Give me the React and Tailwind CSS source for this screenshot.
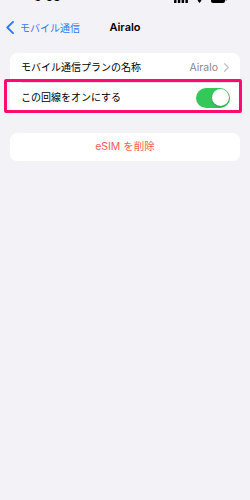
import { useState } from "react";

const font = { fontFamily: 'Inter, "Noto Sans CJK JP", sans-serif' };

function StatusBar() {
  return (
    <div className="h-[13px] overflow-hidden">
      <div className="-mt-[11px] flex items-end justify-between h-[14px] pl-[34px] pr-[23px]">
        <span className="text-[12px] font-semibold leading-none text-black">9:53</span>
        <div className="flex items-end gap-[6px]">
          <svg width="14" height="8" viewBox="0 0 14 8">
            <rect x="0" y="5" width="2.5" height="3" rx="0.5" fill="#000" />
            <rect x="3.8" y="3.5" width="2.5" height="4.5" rx="0.5" fill="#000" />
            <rect x="7.6" y="2" width="2.5" height="6" rx="0.5" fill="#000" />
            <rect x="11.4" y="0" width="2.5" height="8" rx="0.5" fill="#000" />
          </svg>
          <svg width="11" height="8" viewBox="0 0 11 8">
            <path d="M5.5 8 L3.5 5.6 A3 3 0 0 1 7.5 5.6 Z" fill="#000" />
          </svg>
          <svg width="16" height="8" viewBox="0 0 16 8">
            <rect x="0" y="0" width="14" height="8" rx="2" fill="#000" />
            <rect x="14.5" y="2.5" width="1.2" height="3" rx="0.5" fill="#000" />
          </svg>
        </div>
      </div>
    </div>
  );
}

function NavBar() {
  return (
    <div className="relative h-[29px] flex items-center">
      <div className="flex items-center pl-[6px] gap-[6px] text-[#3478f6]">
        <svg width="8" height="13" viewBox="0 0 8 13" fill="none">
          <path d="M7 0.8 L1.3 6.5 L7 12.2" stroke="#3478f6" strokeWidth="1.9" strokeLinecap="round" strokeLinejoin="round" />
        </svg>
        <span className="text-[10px] leading-none">モバイル通信</span>
      </div>
      <div className="absolute inset-0 flex items-center justify-center pointer-events-none">
        <span className="text-[11px] font-semibold text-black leading-none">Airalo</span>
      </div>
    </div>
  );
}

function Toggle({ on, onChange }) {
  return (
    <button
      onClick={() => onChange(!on)}
      className={`w-[34px] h-[20px] rounded-full p-[1.5px] flex ${on ? "bg-[#34c759] justify-end" : "bg-[#e9e9ea] justify-start"}`}
    >
      <span className="w-[17px] h-[17px] rounded-full bg-white shadow-[0_1px_2px_rgba(0,0,0,0.2)]" />
    </button>
  );
}

export default function App() {
  const [on, setOn] = useState(true);

  return (
    <div className="relative min-h-[500px] w-full bg-[#f2f2f7]" style={font}>
      <StatusBar />
      <NavBar />

      {/* plan card */}
      <div className="mx-[10px] mt-[11px] bg-white rounded-[7px] overflow-hidden">
        <div className="h-[29px] flex items-center justify-between pl-[11px] pr-[11px]">
          <span className="text-[10px] text-black">モバイル通信プランの名称</span>
          <div className="flex items-center gap-[6px] text-[#8a8a8e]">
            <span className="text-[10.5px]">Airalo</span>
            <svg width="5" height="9" viewBox="0 0 5 9" fill="none">
              <path d="M0.7 0.7 L4.2 4.5 L0.7 8.3" stroke="#c4c4c7" strokeWidth="1.3" strokeLinecap="round" strokeLinejoin="round" />
            </svg>
          </div>
        </div>
        <div className="ml-[11px] h-px bg-[#e0e0e3]" />
        <div className="h-[29px] flex items-center justify-between pl-[11px] pr-[10px]">
          <span className="text-[10px] text-black">この回線をオンにする</span>
          <Toggle on={on} onChange={setOn} />
        </div>
      </div>

      {/* delete card */}
      <div className="mx-[10px] mt-[21px] h-[28px] bg-white rounded-[7px] flex items-center justify-center">
        <span className="text-[10.5px] text-[#f0605a]">eSIM を削除</span>
      </div>

      {/* highlight annotation */}
      <div className="absolute left-[4px] top-[79px] w-[238px] h-[34px] border-[3px] border-[#ff0a6e] rounded-[2px] pointer-events-none" />
    </div>
  );
}
